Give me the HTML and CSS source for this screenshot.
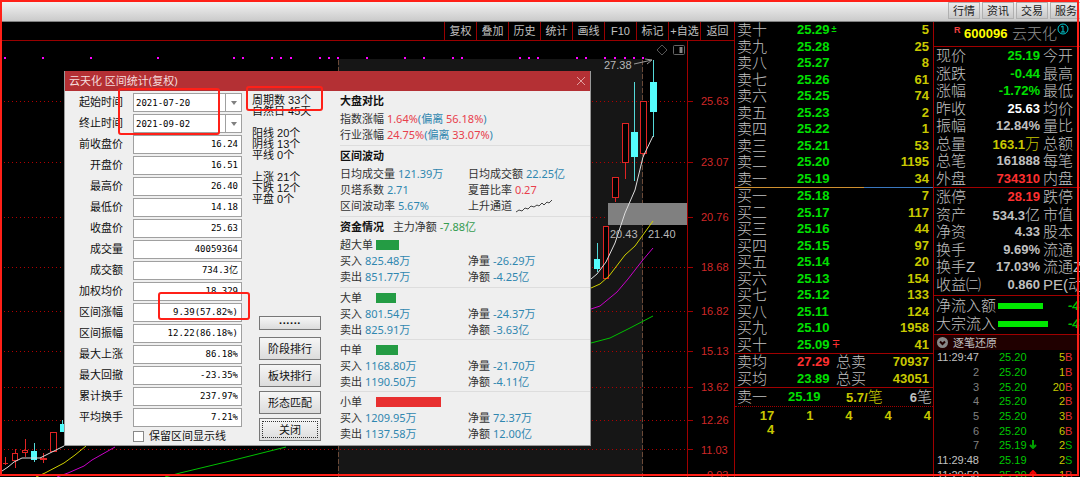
FILE: index.html
```html
<!DOCTYPE html>
<html lang="zh-CN">
<head>
<meta charset="utf-8">
<title>云天化 区间统计</title>
<link rel="stylesheet" href="styles.css">
</head>
<body>
<div class="screen">
  <header class="topbar">
    <button class="tab">行情</button><button class="tab">资讯</button><button class="tab">交易</button><button class="tab">服务</button>
  </header>
  <main class="main">
    <section class="chart">
      <nav class="tools">
        <button>复权</button><button>叠加</button><button>历史</button><button>统计</button><button>画线</button><button>F10</button><button>标记</button><button>+自选</button><button>返回</button>
      </nav>
      <svg class="plot" viewBox="0 41 734 436" preserveAspectRatio="xMaxYMin slice">
        <rect x="338" y="59" width="305" height="418" fill="#161616"/>
        <g class="grid">
          <path d="M4 101.5H687M4 162.5H687M4 217.5H687M4 267.5H687M4 311.5H687M4 351.5H687M4 387.5H687M4 420.5H687M4 449.5H687"/>
        </g>
        <path class="axis" d="M687.5 41V477M688 101.5h5M688 162.5h5M688 217.5h5M688 267.5h5M688 311.5h5M688 351.5h5M688 387.5h5M688 420.5h5M688 449.5h5"/>
        <path class="range" d="M338.5 60V477M642.5 60V477"/>
        <g fill="#f0f">
          <path d="M4 57h2v2h-2zM42 57h2v2h-2zM90 57h2v2h-2zM157 57h2v2h-2zM233 57h2v2h-2zM242 57h2v2h-2zM271 57h2v2h-2zM280 57h2v2h-2zM290 57h2v2h-2zM319 57h2v2h-2zM328 57h2v2h-2zM337 57h2v2h-2zM366 57h2v2h-2zM404 57h2v2h-2zM423 57h2v2h-2zM452 57h2v2h-2zM461 57h2v2h-2zM519 57h2v2h-2zM528 57h2v2h-2zM537 57h2v2h-2zM576 57h2v2h-2zM585 57h2v2h-2zM604 57h2v2h-2zM614 57h2v2h-2zM624 57h2v2h-2zM633 57h2v2h-2zM642 57h2v2h-2z"/>
        </g>
        <rect x="608" y="203" width="79" height="22" fill="#808080"/>
        <g class="up">
          <path d="M5.5 457V465M3 463.5H8M15.5 449V453M15.5 461V468M25.5 439V457M43.5 453V463M615.5 198V202M625.5 163V179M643.5 154V157"/>
          <rect x="12.5" y="453.5" width="5" height="7"/><rect x="22.5" y="450.5" width="5" height="2"/><rect x="40.5" y="458.5" width="6" height="1"/><rect x="50.5" y="432.5" width="6" height="19"/>
          <rect x="603.5" y="226.5" width="5" height="52"/><rect x="612.5" y="177.5" width="6" height="20"/><rect x="622.5" y="123.5" width="6" height="39"/><rect x="640.5" y="101.5" width="6" height="52"/>
        </g>
        <g class="down">
          <path d="M34.5 443V462M62.5 420V432M597.5 243V272M634.5 82V181M653.5 60V137"/>
          <rect x="31" y="451" width="6" height="9"/><rect x="60" y="424" width="5" height="8"/><rect x="594" y="259" width="6" height="10"/><rect x="631" y="132" width="7" height="25"/><rect x="650" y="82" width="7" height="30"/>
        </g>
        <g class="line">
          <path stroke="#ddd" d="M2 471L8 467L14 462L22 458L40 458L52 452L64 446M591 279L597 274L606 262L615 243L625 213L635 190L643 157L653 136"/>
          <path stroke="#d0d000" d="M36 477L45 473L64 463L75 455L86 446M591 288L600 284L609 276L625 255L635 246L653 221"/>
          <path stroke="#c800c8" d="M57 477L68 473L84 466L92 460L115 447M591 309L600 306L617 292L628 279L642 261L653 248"/>
          <path stroke="#00c000" d="M165 477L180 473L230 461L286 447M591 343L610 338L630 328L653 316"/>
          <path stroke="#999" d="M634 64L652 60M645 59L652 60L647 64"/>
          <path stroke="#555" d="M662 45L667 50L662 55L657 50Z"/>
          <rect stroke="#666" x="673.5" y="45.5" width="11" height="9" rx="1"/>
          <path stroke="#888" stroke-width="3" d="M681 47V53"/>
        </g>
        <g class="note"><text x="604" y="69">27.38</text><text x="610" y="238">20.43</text><text x="648" y="238">21.40</text></g>
        <g class="price"><text x="701" y="105">25.63</text><text x="701" y="166">23.07</text><text x="701" y="221">20.76</text><text x="701" y="271">18.68</text><text x="701" y="315">16.82</text><text x="701" y="355">15.13</text><text x="701" y="391">13.62</text><text x="701" y="424">12.26</text><text x="701" y="454">11.03</text><text x="707" y="479">9.93</text></g>
      </svg>
    </section>

    <section class="book">
      <div class="levels ten">
        <div><b>卖十</b><i>25.29<small>±</small></i><em>5</em></div>
        <div><b>卖九</b><i>25.28</i><em>25</em></div>
        <div><b>卖八</b><i>25.27</i><em>8</em></div>
        <div><b>卖七</b><i>25.26</i><em>61</em></div>
        <div><b>卖六</b><i>25.25</i><em>74</em></div>
        <div><b>卖五</b><i>25.23</i><em>2</em></div>
        <div><b>卖四</b><i>25.22</i><em>1</em></div>
        <div><b>卖三</b><i>25.21</i><em>53</em></div>
        <div><b>卖二</b><i>25.20</i><em>1195</em></div>
        <div><b>卖一</b><i>25.19</i><em>34</em></div>
      </div>
      <div class="ratio"></div>
      <div class="levels ten">
        <div><b>买一</b><i>25.18</i><em>7</em></div>
        <div><b>买二</b><i>25.17</i><em>117</em></div>
        <div><b>买三</b><i>25.16</i><em>44</em></div>
        <div><b>买四</b><i>25.15</i><em>97</em></div>
        <div><b>买五</b><i>25.14</i><em>20</em></div>
        <div><b>买六</b><i>25.13</i><em>154</em></div>
        <div><b>买七</b><i>25.12</i><em>133</em></div>
        <div><b>买八</b><i>25.11</i><em>124</em></div>
        <div><b>买九</b><i>25.10</i><em>1958</em></div>
        <div><b>买十</b><i>25.09<small class="red">∓</small></i><em>41</em></div>
      </div>
      <div class="levels totals">
        <div><b>卖均</b><i class="red">27.29</i><b>总卖</b><em>70937</em></div>
        <div><b>买均</b><i>23.89</i><b>总买</b><em>43051</em></div>
      </div>
      <div class="best"><b>卖一</b><i>25.19</i><em>5.7/<span>笔</span></em><strong>6<span>笔</span></strong></div>
      <div class="queue"><em>17</em><em>1</em><em>4</em><em>4</em><em>4</em><em>4</em></div>
    </section>

    <section class="quote">
      <h1 class="stock"><sup>R</sup><strong>600096</strong><span>云天化</span>
        <svg width="12" height="12" viewBox="0 0 12 12"><circle cx="6" cy="6" r="5"/><path d="M4 4L6 3V9M4 9H8"/></svg></h1>
      <div class="facts eight">
        <div><b>现价</b><i class="green">25.19</i><b>今开</b></div>
        <div><b>涨跌</b><i class="green">-0.44</i><b>最高</b></div>
        <div><b>涨幅</b><i class="green">-1.72%</i><b>最低</b></div>
        <div><b>昨收</b><i class="white">25.63</i><b>均价</b></div>
        <div><b>振幅</b><i>12.84%</i><b>量比</b></div>
        <div><b>总量</b><i class="gold">163.1<span>万</span></i><b>总额</b></div>
        <div><b>总笔</b><i>161888</i><b>每笔</b></div>
        <div><b>外盘</b><i class="red">734310</i><b>内盘</b></div>
      </div>
      <div class="facts six">
        <div><b>涨停</b><i class="red">28.19</i><b>跌停</b></div>
        <div><b>资产</b><i>534.3<span>亿</span></i><b>市值</b></div>
        <div><b>净资</b><i>4.33</i><b>股本</b></div>
        <div><b>换手</b><i>9.69%</i><b>流通</b></div>
        <div><b>换手Z</b><i>17.03%</i><b>流通Z</b></div>
        <div><b>收益㈡</b><i>0.860</i><b>PE(动)</b></div>
      </div>
      <div class="flows">
        <div><b>净流入额</b><span class="flow"><span style="width:45px"></span></span><i>-4</i></div>
        <div><b>大宗流入</b><span class="flow"><span style="width:50px"></span></span><i>-4</i></div>
      </div>
      <h2 class="tape-title"><svg width="11" height="11" viewBox="0 0 11 11"><circle cx="5.5" cy="5.5" r="5.5"/><path d="M3 4.5L5.5 7L8 4.5"/></svg>逐笔还原</h2>
      <div class="tape">
        <div><time>11:29:47</time><i>25.20</i><em>5</em><b>B</b></div>
        <div><span>2</span><i>25.20</i><em>1</em><b>B</b></div>
        <div><span>3</span><i>25.20</i><em>20</em><b>B</b></div>
        <div><span>4</span><i>25.20</i><em>2</em><b>B</b></div>
        <div><span>5</span><i>25.20</i><em>3</em><b>B</b></div>
        <div><span>6</span><i>25.20</i><em>6</em><b>B</b></div>
        <div><span>7</span><i>25.19<svg width="8" height="9" viewBox="0 0 8 9"><path d="M4 0V8M1 5L4 8L7 5"/></svg></i><em>2</em><b class="s">S</b></div>
        <div><time>11:29:48</time><i>25.19</i><em>2</em><b class="s">S</b></div>
        <div><time>11:29:50</time><i>25.20<svg class="rise" width="8" height="9" viewBox="0 0 8 9"><path d="M4 9V1M1 4L4 1L7 4"/></svg></i><em>1</em><b>B</b></div>
      </div>
    </section>
  </main>

  <section class="dialog" role="dialog" aria-labelledby="dlg-title">
    <header class="dialog-head"><h2 id="dlg-title">云天化 区间统计(复权)</h2>
      <button class="close" aria-label="关闭窗口"><svg width="10" height="10" viewBox="0 0 10 10"><path d="M1 1L9 9M9 1L1 9"/></svg></button></header>
    <div class="dialog-body">
      <form class="form">
        <label for="f1">起始时间</label><span class="combo"><select id="f1"><option>2021-07-20</option></select></span>
        <label for="f2">终止时间</label><span class="combo"><select id="f2"><option>2021-09-02</option></select></span>
        <label for="f3">前收盘价</label><input id="f3" value="16.24">
        <label for="f4">开盘价</label><input id="f4" value="16.51">
        <label for="f5">最高价</label><input id="f5" value="26.40">
        <label for="f6">最低价</label><input id="f6" value="14.18">
        <label for="f7">收盘价</label><input id="f7" value="25.63">
        <label for="f8">成交量</label><input id="f8" value="40059364">
        <label for="f9">成交额</label><input id="f9" value="734.3亿">
        <label for="f10">加权均价</label><input id="f10" value="18.329">
        <label for="f11">区间涨幅</label><input id="f11" value="9.39(57.82%)">
        <label for="f12">区间振幅</label><input id="f12" value="12.22(86.18%)">
        <label for="f13">最大上涨</label><input id="f13" value="86.18%">
        <label for="f14">最大回撤</label><input id="f14" value="-23.35%">
        <label for="f15">累计换手</label><input id="f15" value="237.97%">
        <label for="f16">平均换手</label><input id="f16" value="7.21%">
        <div class="keep"><input type="checkbox" id="keep"><label for="keep">保留区间显示线</label></div>
      </form>
      <div class="side">
        <div class="counts"><p>周期数 33个</p><p>自然日 45天</p></div>
        <div class="counts"><p>阳线 20个</p><p>阴线 13个</p><p>平线 0个</p></div>
        <div class="counts"><p>上涨 21个</p><p>下跌 12个</p><p>平盘 0个</p></div>
        <div class="actions">
          <button class="more">······</button><button>阶段排行</button><button>板块排行</button><button>形态匹配</button><button class="focus">关闭</button>
        </div>
      </div>
      <div class="report">
        <section>
          <h3>大盘对比</h3>
          <p>指数涨幅 <span class="r">1.64%</span><span class="b">(偏离 </span><span class="r">56.18%</span><span class="b">)</span></p>
          <p>行业涨幅 <span class="r">24.75%</span><span class="b">(偏离 </span><span class="r">33.07%</span><span class="b">)</span></p>
        </section>
        <section>
          <h3>区间波动</h3>
          <div class="pair"><p>日均成交量 <span class="b">121.39万</span></p><p>日均成交额 <span class="b">22.25亿</span></p></div>
          <div class="pair"><p>贝塔系数 <span class="b">2.71</span></p><p>夏普比率 <span class="r">0.27</span></p></div>
          <div class="pair"><p>区间波动率 <span class="b">5.67%</span></p><p>上升通道 <svg width="38" height="14" viewBox="0 0 38 14"><path d="M1 13L4 11L7 12L10 9L13 10L16 7L19 8L22 6L24 7L27 4L29 6L32 3L34 4L37 1"/></svg></p></div>
        </section>
        <section>
          <h3>资金情况 <span>主力净额 <span class="g">-7.88亿</span></span></h3>
          <p class="size"><span>超大单</span><span class="bar" style="width:23px"></span></p>
          <div class="pair"><p>买入 <span class="b">825.48万</span></p><p>净量 <span class="b">-26.29万</span></p></div>
          <div class="pair"><p>卖出 <span class="b">851.77万</span></p><p>净额 <span class="b">-4.25亿</span></p></div>
        </section>
        <section class="order">
          <p class="size"><span>大单</span><span class="bar" style="width:20px"></span></p>
          <div class="pair"><p>买入 <span class="b">801.54万</span></p><p>净量 <span class="b">-24.37万</span></p></div>
          <div class="pair"><p>卖出 <span class="b">825.91万</span></p><p>净额 <span class="b">-3.63亿</span></p></div>
        </section>
        <section class="order">
          <p class="size"><span>中单</span><span class="bar" style="width:22px"></span></p>
          <div class="pair"><p>买入 <span class="b">1168.80万</span></p><p>净量 <span class="b">-21.70万</span></p></div>
          <div class="pair"><p>卖出 <span class="b">1190.50万</span></p><p>净额 <span class="b">-4.11亿</span></p></div>
        </section>
        <section class="order">
          <p class="size"><span>小单</span><span class="bar buy" style="width:65px"></span></p>
          <div class="pair"><p>买入 <span class="b">1209.95万</span></p><p>净量 <span class="b">72.37万</span></p></div>
          <div class="pair"><p>卖出 <span class="b">1137.58万</span></p><p>净额 <span class="b">12.00亿</span></p></div>
        </section>
      </div>
    </div>
  </section>
  <div class="mark mark-dates"></div>
  <div class="mark mark-cycle"></div>
  <div class="mark mark-gain"></div>
  <div class="frame"></div>
</div>
</body>
</html>
```
FILE: styles.css
```css
* { box-sizing: border-box; }
body, h1, h2, h3, p { margin: 0; }
b, i, em, h1, h2, h3, strong { font-weight: inherit; font-style: normal; }
body {
  background: #000;
  color: #c0c0c0;
  font: 11px/16px "Liberation Sans", "Noto Sans CJK SC", sans-serif;
}
button, input, select { font: inherit; color: inherit; margin: 0; padding: 0; border-radius: 0; }
svg { fill: none; }

.screen { position: relative; display: flex; flex-direction: column; height: 100vh; overflow: hidden; }

.topbar {
  display: flex;
  justify-content: flex-end;
  gap: 2px;
  flex: 0 0 22px;
  padding: 2px 0 2px 2px;
  margin-right: -2px;
  background: linear-gradient(#f6f6f6, #cacaca);
  border-bottom: 1px solid #808080;
}
.tab { width: 32px; border: 1px solid #b0b0b0; background: linear-gradient(#ececec, #c8c8c8); color: #222; line-height: 14px; }

.main { display: grid; grid-template-columns: minmax(0, 1fr) 199px 147px; flex: 1; min-height: 0; }

/* chart */
.chart { display: flex; flex-direction: column; min-width: 0; min-height: 0; }
.tools { display: flex; justify-content: flex-end; flex: 0 0 19px; border-bottom: 1px solid #900; }
.tools button { width: 32px; border: 0; border-left: 1px solid #900; background: #000; color: #c0c0c0; white-space: nowrap; line-height: 18px; }
.tools button:last-child { width: 34px; }
.plot { flex: 1; width: 100%; min-height: 0; font-size: 11px; }
.grid path { stroke: #b00000; stroke-dasharray: 1 3; }
.axis { stroke: #a00000; }
.range { stroke: #6b4a38; stroke-dasharray: 5 2; }
.up path, .up rect { stroke: #e02424; }
.up rect { fill: #000; }
.down path { stroke: #54d8d8; }
.down rect { fill: #54fcfc; }
.note { fill: #b8b8b8; }
.price { fill: #d02828; }

/* order book */
.book, .quote { border-left: 1px solid #a00000; min-width: 0; overflow: hidden; font-size: 13px; font-weight: 700; }
.book b, .quote b, .book span, .facts span, .stock span { font-size: 15px; font-weight: 300; white-space: nowrap; }
.levels { display: grid; grid-auto-rows: 1fr; padding: 0 4px 0 2px; }
.ten { height: 165px; }
.levels > div { display: grid; grid-template-columns: 60px 1fr auto; align-items: center; min-height: 0; line-height: 16px; }
.levels i, .best i { color: #00e000; }
.levels em, .queue em, .best em { color: #c8c800; }
.levels small { font-size: 9px; margin-left: 2px; line-height: 9px; vertical-align: 2px; }
.ratio { height: 1px; background: linear-gradient(90deg, #d09030 65%, #3a78c0 65%); }
.totals { height: 35px; border: solid #a00000; border-width: 1px 0; }
.totals > div { grid-template-columns: 60px 39px 1fr auto; }
.book .red, .quote .red { color: #ff3030; }
.best { display: grid; grid-template-columns: 51px 58px 1fr auto; padding: 0 1px 0 2px; line-height: 17px; border-bottom: 1px dotted #a00000; }
.queue { display: grid; grid-template-columns: repeat(5, 1fr); line-height: 14px; padding: 2px 2px 0 0; text-align: right; }

/* quote */
.stock { display: flex; height: 25px; padding-left: 20px; border-bottom: 1px solid #a00000; font-size: 13px; line-height: 24px; }
.stock sup { width: 10px; font-size: 9px; line-height: 16px; color: #f04040; }
.stock strong { color: #ffff00; font-weight: 700; width: 48px; }
.stock span { color: #909090; }
.stock svg { margin-top: 1px; stroke: #00c8d0; flex: none; }
.facts { display: grid; grid-auto-rows: 1fr; padding-left: 2px; border-bottom: 1px solid #a00000; }
.eight { height: 141px; }
.six { height: 108px; padding-bottom: 2px; }
.facts > div { display: grid; grid-template-columns: 47px 57px 1fr; align-items: center; min-height: 0; line-height: 17px; }
.facts i { justify-self: end; white-space: nowrap; }
.facts b:last-child { margin-left: 3px; }
.green { color: #00e000; }
.white { color: #fff; }
.gold { color: #c8c800; }
.flows { padding: 1px 0 1px 2px; border-bottom: 1px solid #a00000; }
.flows > div { display: grid; grid-template-columns: 62px 70px 1fr; align-items: center; line-height: 18px; }
.flow span { display: block; height: 6px; background: #00e800; }
.flows i { color: #00c000; font-style: italic; }
.tape-title { display: flex; align-items: center; gap: 5px; height: 15px; padding-left: 3px; background: #200000; font-size: 11px; font-weight: 400; color: #c0c0c0; }
.tape-title circle { fill: #888; }
.tape-title path { stroke: #200000; stroke-width: 2; }
.tape { padding-left: 2px; font-size: 11px; font-weight: 400; }
.tape > div { display: grid; grid-template-columns: 43px 50px 36px 10px; line-height: 15px; }
.tape > div:nth-child(3n) { line-height: 14px; }
.tape time, .tape span, .tape em { text-align: right; }
.tape span { color: #808080; }
.tape i { padding-left: 20px; color: #00c800; white-space: nowrap; }
.tape em { color: #c8c800; }
.tape b { font-size: 11px; font-weight: 400; color: #e03030; }
.tape .s { color: #00b800; }
.tape svg { margin-left: 2px; stroke: #00a000; stroke-width: 2; }
.tape .rise { stroke: #f00000; }

/* statistics dialog */
.dialog { position: absolute; left: 64px; top: 71px; width: 527px; background: #efefef; border: 1px solid #999; border-top: 0; color: #111; }
.dialog-head { display: flex; align-items: center; justify-content: space-between; height: 20px; padding: 0 4px; background: #b43034; color: #f4dede; }
.dialog-head h2, .report { font-family: "Noto Sans", "Noto Sans CJK SC", sans-serif; font-size: 11px; }
.close { display: flex; border: 0; background: none; stroke: #e0a0a0; }
.dialog-body { display: grid; grid-template-columns: 187px 88px 1fr; }
.form { display: grid; grid-template-columns: 58px 109px; grid-template-rows: repeat(16, 19px) 14px; column-gap: 10px; row-gap: 2px; padding: 2px 0; align-content: start; }
.form > label { text-align: right; line-height: 18px; }
.form > input, .combo select { width: 100%; height: 100%; border: 1px solid #a0a0a0; background: #fff; color: #000; font: 9px/14px "DejaVu Sans Mono", "Noto Sans CJK SC", monospace; }
.form > input { padding: 0 3px 2px; text-align: right; }
.combo { position: relative; }
.combo select { appearance: none; padding: 0 2px; }
.combo::before { content: ""; position: absolute; right: 16px; top: 1px; bottom: 1px; border-left: 1px solid #a0a0a0; }
.combo::after { content: ""; position: absolute; right: 5px; top: 8px; border: solid transparent; border-width: 4px 3px 0; border-top-color: #808080; }
.keep { grid-column: 2; display: flex; align-items: center; gap: 5px; white-space: nowrap; }
.keep input { appearance: none; width: 11px; height: 11px; flex: none; border: 1px solid #888; background: #fff; }
.side { display: flex; flex-direction: column; padding: 4px 0; }
.counts { line-height: 11px; margin-bottom: 11px; }
.actions { display: flex; flex-direction: column; gap: 4px; width: 62px; margin: auto 0 0 7px; }
.actions button { height: 23px; border: 1px solid #777; background: linear-gradient(#f6f6f6, #dcdcdc); }
.actions .more { height: 14px; margin-bottom: 3px; line-height: 10px; font-weight: 700; }
.actions .focus { outline: 1px dotted #333; outline-offset: -4px; }
.report { color: #333; }
.report section { padding-bottom: 2px; border-bottom: 1px solid #ddd; }
.report h3 { line-height: 20px; font-size: 11px; font-weight: 700; color: #111; }
.report h3 > span { font-weight: 400; color: #333; margin-left: 6px; }
.report .order { padding: 2px 0 1px; }
.report .order:last-child { border: 0; }
.pair { display: grid; grid-template-columns: 128px 1fr; }
.pair svg { stroke: #444; vertical-align: -3px; }
.size { display: flex; align-items: center; height: 16px; }
.size > span:first-child { width: 36px; }
.bar { height: 10px; background: #249c44; }
.bar.buy { background: #e83030; }
.r { color: #e8404c; }
.b { color: #2f87b0; }
.g { color: #349c50; }

/* red highlight marks */
.mark, .frame { position: absolute; border: 2px solid #ff2018; pointer-events: none; }
.mark { border-radius: 3px; }
.mark-dates { left: 118px; top: 88px; width: 102px; height: 47px; }
.mark-cycle { left: 246px; top: 86px; width: 77px; height: 25px; }
.mark-gain { left: 158px; top: 292px; width: 92px; height: 28px; }
.frame { inset: 0 1px 1px 0; }
```
